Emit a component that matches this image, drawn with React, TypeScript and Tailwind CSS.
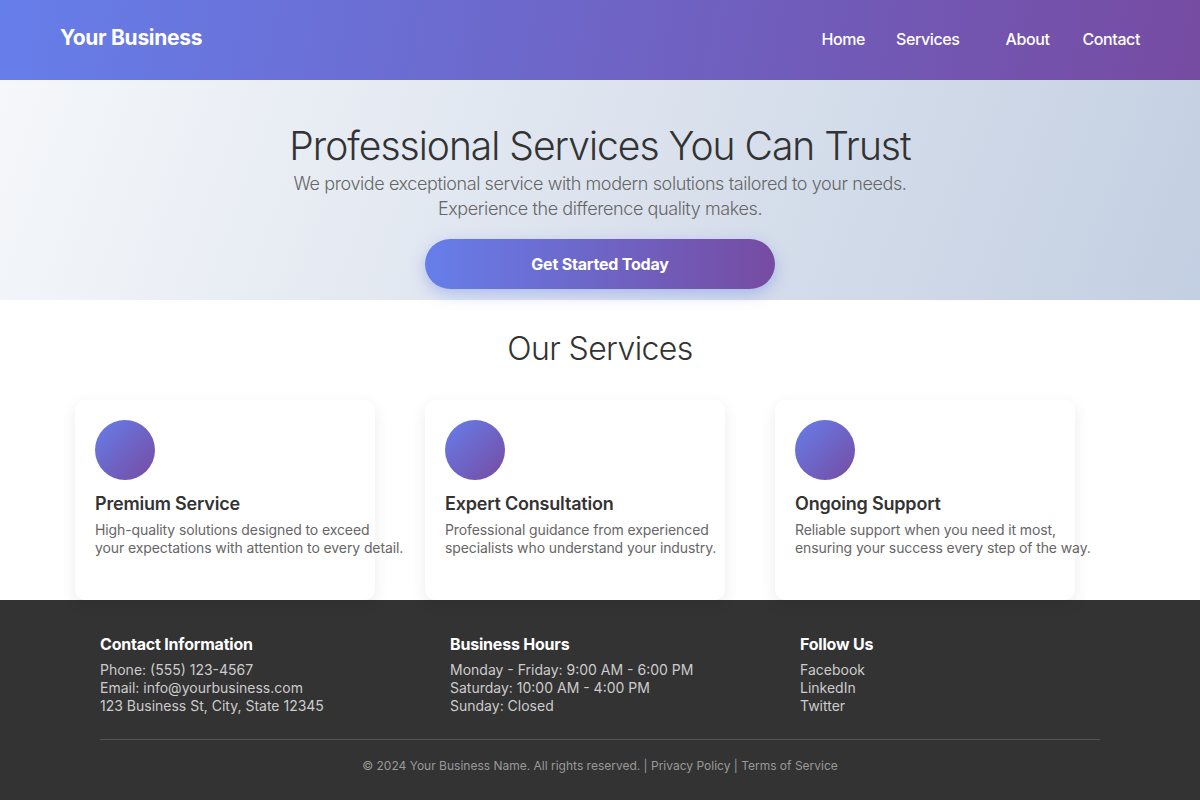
import React from "react";

const services = [
  { title: "Premium Service", lines: ["High-quality solutions designed to exceed", "your expectations with attention to every detail."] },
  { title: "Expert Consultation", lines: ["Professional guidance from experienced", "specialists who understand your industry."] },
  { title: "Ongoing Support", lines: ["Reliable support when you need it most,", "ensuring your success every step of the way."] },
];

export default function App() {
  return (
    <div className="w-[1200px] h-[800px] overflow-hidden font-['Inter','Liberation_Sans',sans-serif]">
      <header className="h-[80px] bg-[linear-gradient(100deg,#667eea_0%,#764ba2_100%)] flex items-center justify-between px-[60px] text-white">
        <div className="text-[21px] font-bold tracking-[-0.3px] -mt-[5px]">Your Business</div>
        <nav className="flex items-center text-[16px] font-medium tracking-[-0.4px] -mt-[2px]">
          <a className="mr-[31px]">Home</a>
          <a className="mr-[46px]">Services</a>
          <a className="mr-[33px]">About</a>
          <a>Contact</a>
        </nav>
      </header>

      <section className="h-[220px] bg-[linear-gradient(110deg,#f5f7fa_0%,#c3cfe2_100%)] flex flex-col items-center pt-[42px]">
        <h1 className="text-[39px] font-light text-[#333] leading-[48px] tracking-[-1px]">Professional Services You Can Trust</h1>
        <p className="mt-[1px] text-[18px] font-light text-[#666] leading-[25px] text-center tracking-[-0.4px] whitespace-nowrap">
          We provide exceptional service with modern solutions tailored to your needs.
          <br />
          Experience the difference quality makes.
        </p>
        <button className="mt-[18px] w-[350px] h-[50px] rounded-full bg-[linear-gradient(90deg,#667eea_0%,#764ba2_100%)] text-white font-bold text-[16px] tracking-[-0.2px] shadow-[0_5px_15px_rgba(102,126,234,0.4)]">
          Get Started Today
        </button>
      </section>

      <section className="h-[300px] bg-white flex flex-col pt-[30px]">
        <h2 className="text-center text-[32px] font-light text-[#333] leading-[38px] tracking-[-0.6px]">Our Services</h2>
        <div className="mt-[32px] flex gap-[50px] pl-[75px]">
          {services.map((s) => (
            <div key={s.title} className="w-[300px] h-[200px] shrink-0 rounded-[10px] bg-white shadow-[0_5px_15px_rgba(0,0,0,0.08)] p-[20px]">
              <div className="w-[60px] h-[60px] rounded-full bg-[linear-gradient(135deg,#667eea_0%,#764ba2_100%)]" />
              <h3 className="mt-[13px] text-[18px] font-semibold text-[#333] leading-[22px] tracking-[-0.2px]">{s.title}</h3>
              <p className="mt-[6px] text-[14px] text-[#666] leading-[18px] whitespace-nowrap tracking-[-0.1px]">
                {s.lines[0]}
                <br />
                {s.lines[1]}
              </p>
            </div>
          ))}
        </div>
      </section>

      <footer className="h-[200px] bg-[#333] px-[100px] pt-[34px]">
        <div className="grid grid-cols-[350px_350px_300px]">
          <div>
            <h4 className="text-[16px] font-bold text-white leading-[20px] tracking-[-0.2px]">Contact Information</h4>
            <div className="mt-[7px] text-[14px] text-[#ccc] leading-[18px]">
              <p>Phone: (555) 123-4567</p>
              <p>Email: info@yourbusiness.com</p>
              <p>123 Business St, City, State 12345</p>
            </div>
          </div>
          <div>
            <h4 className="text-[16px] font-bold text-white leading-[20px] tracking-[-0.2px]">Business Hours</h4>
            <div className="mt-[7px] text-[14px] text-[#ccc] leading-[18px]">
              <p>Monday - Friday: 9:00 AM - 6:00 PM</p>
              <p>Saturday: 10:00 AM - 4:00 PM</p>
              <p>Sunday: Closed</p>
            </div>
          </div>
          <div>
            <h4 className="text-[16px] font-bold text-white leading-[20px] tracking-[-0.2px]">Follow Us</h4>
            <div className="mt-[7px] text-[14px] text-[#ccc] leading-[18px]">
              <p>Facebook</p>
              <p>LinkedIn</p>
              <p>Twitter</p>
            </div>
          </div>
        </div>
        <div className="mt-[24px] border-t border-[#555] pt-[18px] text-center text-[12px] text-[#999] leading-[16px]">
          © 2024 Your Business Name. All rights reserved. | Privacy Policy | Terms of Service
        </div>
      </footer>
    </div>
  );
}
